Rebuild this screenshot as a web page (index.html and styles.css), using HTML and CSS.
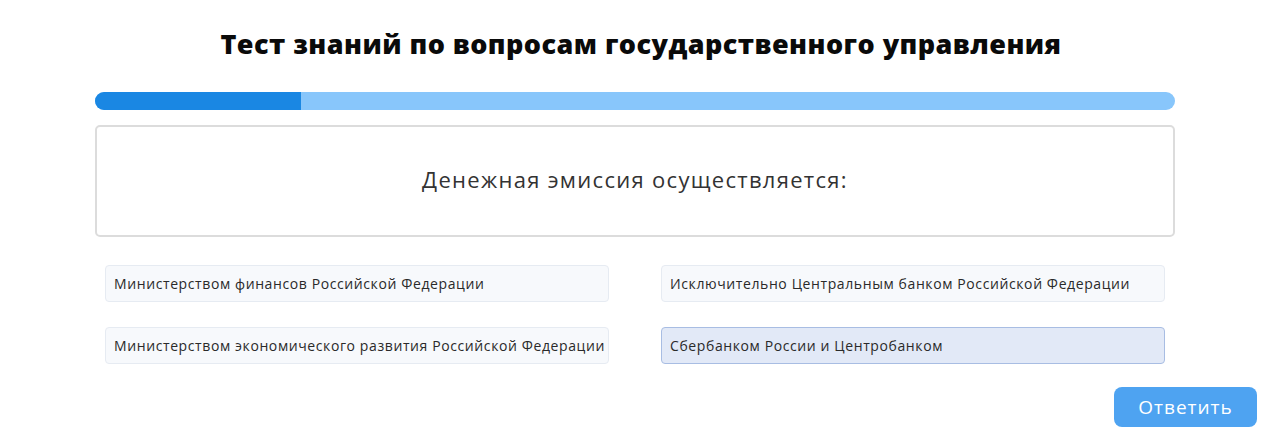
FILE: index.html
```html
<!DOCTYPE html>
<html lang="ru">
<head>
<meta charset="utf-8">
<title>Тест</title>
<link rel="stylesheet" href="styles.css">
</head>
<body>
<main class="quiz">
  <h1 class="title">Тест знаний по вопросам государственного управления</h1>
  <div class="progress"><div class="progress-fill" style="width:19.1%"></div></div>
  <div class="question">Денежная эмиссия осуществляется:</div>
  <div class="options">
    <div class="option">Министерством финансов Российской Федерации</div>
    <div class="option">Исключительно Центральным банком Российской Федерации</div>
    <div class="option">Министерством экономического развития Российской Федерации</div>
    <div class="option selected">Сбербанком России и Центробанком</div>
  </div>
  <div class="actions"><button class="submit">Ответить</button></div>
</main>
</body>
</html>
```
FILE: styles.css
```css
* { box-sizing: border-box; }
html, body { margin: 0; padding: 0; background: #fff; }
body { font-family: "Open Sans", "Noto Sans", sans-serif; color: #222; }
.quiz {
  width: 1080px;
  margin-left: 95px;
  padding-top: 25px;
}
.title {
  margin: 0 0 0 12px;
  text-align: center;
  font-size: 27px;
  letter-spacing: 0.45px;
  line-height: 38px;
  font-weight: 800;
  color: #0a0a0a;
}
.progress {
  margin-top: 29px;
  height: 18px;
  border-radius: 9px;
  background: #88c6fb;
  overflow: hidden;
}
.progress-fill {
  height: 100%;
  background: #1a87e3;
}
.question {
  margin-top: 15px;
  height: 112px;
  padding-bottom: 5px;
  border: 2px solid #dcdcdc;
  border-radius: 5px;
  display: flex;
  align-items: center;
  justify-content: center;
  font-size: 22px;
  letter-spacing: 1.3px;
  color: #333;
}
.options {
  margin-top: 28px;
  padding: 0 10px;
  display: grid;
  grid-template-columns: 504px 504px;
  column-gap: 52px;
  row-gap: 25px;
}
.option {
  height: 37px;
  padding: 0 8px;
  display: flex;
  align-items: center;
  background: #f7f9fc;
  border: 1px solid #e6ebf2;
  border-radius: 4px;
  font-size: 14px;
  letter-spacing: 0.6px;
  color: #2a2a2a;
  white-space: nowrap;
}
.option.selected {
  background: #e2e9f7;
  border-color: #a8bde3;
}
.actions {
  display: flex;
  justify-content: flex-end;
  margin-right: -82px;
  margin-top: 23px;
}
.submit {
  width: 143px;
  height: 40px;
  border: 0;
  border-radius: 8px;
  background: #4ea3f1;
  color: #fff;
  font-family: inherit;
  font-size: 19px;
  letter-spacing: 1px;
}
```
